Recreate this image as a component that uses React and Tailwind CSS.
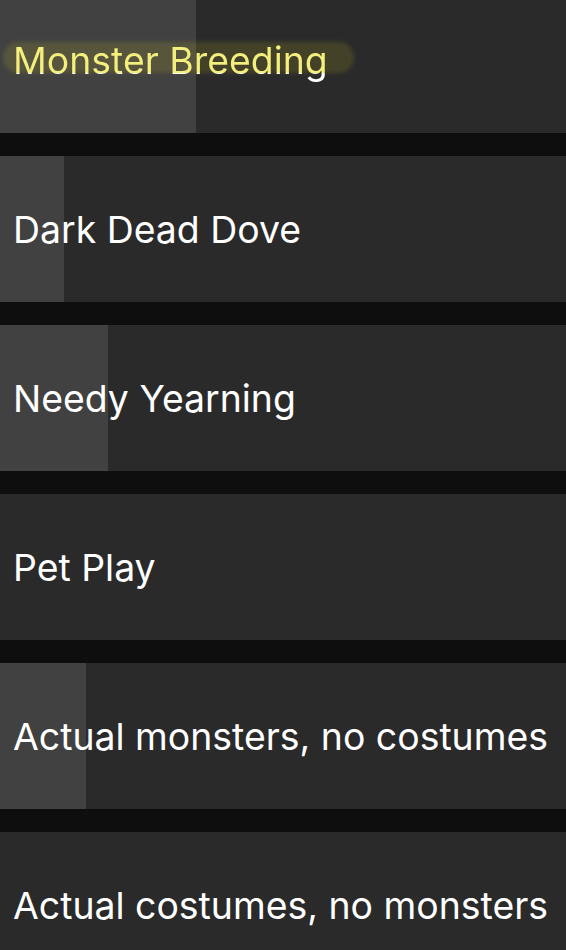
const options = [
  { label: "Monster Breeding", fill: "w-[196px]", highlight: true },
  { label: "Dark Dead Dove", fill: "w-[64px]" },
  { label: "Needy Yearning", fill: "w-[108px]" },
  { label: "Pet Play", fill: "w-0" },
  { label: "Actual monsters, no costumes", fill: "w-[86px]" },
  { label: "Actual costumes, no monsters", fill: "w-0" },
];

function OptionRow({ label, fill, highlight }) {
  return (
    <div className="relative h-[146px] shrink-0 bg-[#2a2a2a] overflow-hidden">
      <div className={`absolute left-0 top-0 bottom-0 bg-[#414141] ${fill}`}></div>
      <div className="relative flex h-full items-center pl-[13px] pt-[2px]">
        {highlight ? (
          <span className="relative">
            <span className="absolute -left-[10px] -right-[26px] top-[0px] h-[31px] rounded-full bg-[#d8cf2a]/15 blur-[2px]"></span>
            <span className="relative bg-[linear-gradient(to_bottom,#f4ee7d_78%,#ffffff_78%)] bg-clip-text text-transparent">{label}</span>
          </span>
        ) : (
          <span>{label}</span>
        )}
      </div>
    </div>
  );
}

export default function App() {
  return (
    <div className="h-[950px] w-full overflow-hidden bg-[#0e0e0e] font-['Inter',sans-serif] text-[37.4px] leading-none text-white">
      <div className="-mt-[13px] flex flex-col gap-[23px]">
        {options.map((o) => (
          <OptionRow key={o.label} {...o} />
        ))}
      </div>
    </div>
  );
}
